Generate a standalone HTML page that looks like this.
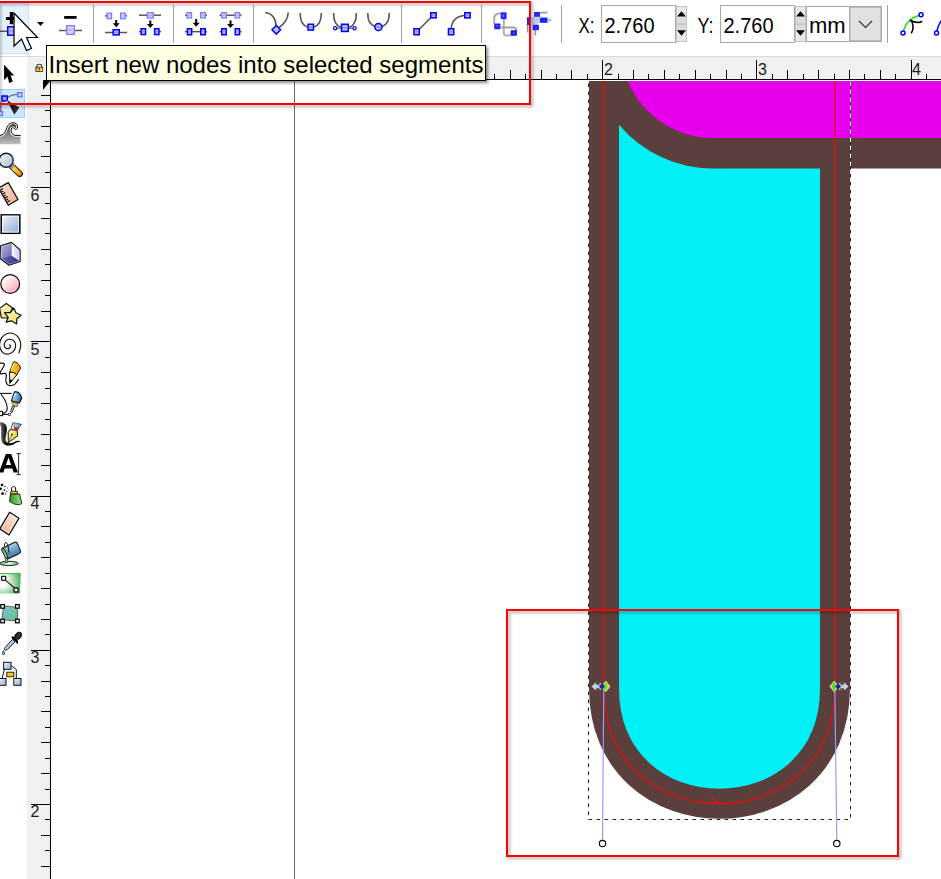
<!DOCTYPE html>
<html><head><meta charset="utf-8"><style>
html,body{margin:0;padding:0;width:941px;height:879px;overflow:hidden;background:#fff}
svg{display:block}
</style></head><body>
<svg width="941" height="879" viewBox="0 0 941 879">
<rect x="0" y="0" width="941" height="879" fill="#ffffff"/><rect x="0" y="56" width="941" height="1" fill="#dadada"/><rect x="27" y="57" width="914" height="22" fill="#f0f0f0"/><rect x="27" y="57" width="23" height="822" fill="#f0f0f0"/><rect x="50" y="80" width="1" height="799" fill="#000"/><rect x="50" y="79" width="891" height="1" fill="#000"/><rect x="63" y="74" width="1" height="5" fill="#000"/><rect x="78" y="70" width="1" height="9" fill="#000"/><rect x="93" y="74" width="1" height="5" fill="#000"/><rect x="109" y="70" width="1" height="9" fill="#000"/><rect x="124" y="74" width="1" height="5" fill="#000"/><rect x="140" y="60" width="1" height="19" fill="#000"/><rect x="155" y="74" width="1" height="5" fill="#000"/><rect x="170" y="70" width="1" height="9" fill="#000"/><rect x="186" y="74" width="1" height="5" fill="#000"/><rect x="201" y="70" width="1" height="9" fill="#000"/><rect x="217" y="74" width="1" height="5" fill="#000"/><rect x="232" y="70" width="1" height="9" fill="#000"/><rect x="248" y="74" width="1" height="5" fill="#000"/><rect x="263" y="70" width="1" height="9" fill="#000"/><rect x="278" y="74" width="1" height="5" fill="#000"/><rect x="294" y="60" width="1" height="19" fill="#000"/><rect x="309" y="74" width="1" height="5" fill="#000"/><rect x="325" y="70" width="1" height="9" fill="#000"/><rect x="340" y="74" width="1" height="5" fill="#000"/><rect x="355" y="70" width="1" height="9" fill="#000"/><rect x="371" y="74" width="1" height="5" fill="#000"/><rect x="386" y="70" width="1" height="9" fill="#000"/><rect x="402" y="74" width="1" height="5" fill="#000"/><rect x="417" y="70" width="1" height="9" fill="#000"/><rect x="433" y="74" width="1" height="5" fill="#000"/><rect x="448" y="60" width="1" height="19" fill="#000"/><rect x="463" y="74" width="1" height="5" fill="#000"/><rect x="479" y="70" width="1" height="9" fill="#000"/><rect x="494" y="74" width="1" height="5" fill="#000"/><rect x="510" y="70" width="1" height="9" fill="#000"/><rect x="525" y="74" width="1" height="5" fill="#000"/><rect x="541" y="70" width="1" height="9" fill="#000"/><rect x="556" y="74" width="1" height="5" fill="#000"/><rect x="571" y="70" width="1" height="9" fill="#000"/><rect x="587" y="74" width="1" height="5" fill="#000"/><rect x="602" y="60" width="1" height="19" fill="#000"/><rect x="618" y="74" width="1" height="5" fill="#000"/><rect x="633" y="70" width="1" height="9" fill="#000"/><rect x="648" y="74" width="1" height="5" fill="#000"/><rect x="664" y="70" width="1" height="9" fill="#000"/><rect x="679" y="74" width="1" height="5" fill="#000"/><rect x="695" y="70" width="1" height="9" fill="#000"/><rect x="710" y="74" width="1" height="5" fill="#000"/><rect x="726" y="70" width="1" height="9" fill="#000"/><rect x="741" y="74" width="1" height="5" fill="#000"/><rect x="756" y="60" width="1" height="19" fill="#000"/><rect x="772" y="74" width="1" height="5" fill="#000"/><rect x="787" y="70" width="1" height="9" fill="#000"/><rect x="803" y="74" width="1" height="5" fill="#000"/><rect x="818" y="70" width="1" height="9" fill="#000"/><rect x="834" y="74" width="1" height="5" fill="#000"/><rect x="849" y="70" width="1" height="9" fill="#000"/><rect x="864" y="74" width="1" height="5" fill="#000"/><rect x="880" y="70" width="1" height="9" fill="#000"/><rect x="895" y="74" width="1" height="5" fill="#000"/><rect x="911" y="60" width="1" height="19" fill="#000"/><rect x="926" y="74" width="1" height="5" fill="#000"/><text x="604.1" y="75" font-family='"Liberation Sans", sans-serif' font-size="16" fill="#1a1a1a">2</text><text x="758.1" y="75" font-family='"Liberation Sans", sans-serif' font-size="16" fill="#1a1a1a">3</text><text x="912.1" y="75" font-family='"Liberation Sans", sans-serif' font-size="16" fill="#1a1a1a">4</text><text x="450.1" y="75" font-family='"Liberation Sans", sans-serif' font-size="16" fill="#1a1a1a">1</text><rect x="41" y="95" width="9" height="1" fill="#000"/><rect x="45" y="110" width="5" height="1" fill="#000"/><rect x="41" y="126" width="9" height="1" fill="#000"/><rect x="45" y="141" width="5" height="1" fill="#000"/><rect x="41" y="156" width="9" height="1" fill="#000"/><rect x="45" y="172" width="5" height="1" fill="#000"/><rect x="31" y="187" width="19" height="1" fill="#000"/><rect x="45" y="203" width="5" height="1" fill="#000"/><rect x="41" y="218" width="9" height="1" fill="#000"/><rect x="45" y="233" width="5" height="1" fill="#000"/><rect x="41" y="249" width="9" height="1" fill="#000"/><rect x="45" y="264" width="5" height="1" fill="#000"/><rect x="41" y="280" width="9" height="1" fill="#000"/><rect x="45" y="295" width="5" height="1" fill="#000"/><rect x="41" y="311" width="9" height="1" fill="#000"/><rect x="45" y="326" width="5" height="1" fill="#000"/><rect x="31" y="341" width="19" height="1" fill="#000"/><rect x="45" y="357" width="5" height="1" fill="#000"/><rect x="41" y="372" width="9" height="1" fill="#000"/><rect x="45" y="388" width="5" height="1" fill="#000"/><rect x="41" y="403" width="9" height="1" fill="#000"/><rect x="45" y="419" width="5" height="1" fill="#000"/><rect x="41" y="434" width="9" height="1" fill="#000"/><rect x="45" y="449" width="5" height="1" fill="#000"/><rect x="41" y="465" width="9" height="1" fill="#000"/><rect x="45" y="480" width="5" height="1" fill="#000"/><rect x="31" y="496" width="19" height="1" fill="#000"/><rect x="45" y="511" width="5" height="1" fill="#000"/><rect x="41" y="526" width="9" height="1" fill="#000"/><rect x="45" y="542" width="5" height="1" fill="#000"/><rect x="41" y="557" width="9" height="1" fill="#000"/><rect x="45" y="573" width="5" height="1" fill="#000"/><rect x="41" y="588" width="9" height="1" fill="#000"/><rect x="45" y="604" width="5" height="1" fill="#000"/><rect x="41" y="619" width="9" height="1" fill="#000"/><rect x="45" y="634" width="5" height="1" fill="#000"/><rect x="31" y="650" width="19" height="1" fill="#000"/><rect x="45" y="665" width="5" height="1" fill="#000"/><rect x="41" y="681" width="9" height="1" fill="#000"/><rect x="45" y="696" width="5" height="1" fill="#000"/><rect x="41" y="711" width="9" height="1" fill="#000"/><rect x="45" y="727" width="5" height="1" fill="#000"/><rect x="41" y="742" width="9" height="1" fill="#000"/><rect x="45" y="758" width="5" height="1" fill="#000"/><rect x="41" y="773" width="9" height="1" fill="#000"/><rect x="45" y="789" width="5" height="1" fill="#000"/><rect x="31" y="804" width="19" height="1" fill="#000"/><rect x="45" y="819" width="5" height="1" fill="#000"/><rect x="41" y="835" width="9" height="1" fill="#000"/><rect x="45" y="850" width="5" height="1" fill="#000"/><rect x="41" y="866" width="9" height="1" fill="#000"/><text x="30.6" y="200.79999999999998" font-family='"Liberation Sans", sans-serif' font-size="16" fill="#1a1a1a">6</text><text x="30.6" y="354.8" font-family='"Liberation Sans", sans-serif' font-size="16" fill="#1a1a1a">5</text><text x="30.6" y="508.8" font-family='"Liberation Sans", sans-serif' font-size="16" fill="#1a1a1a">4</text><text x="30.6" y="662.8000000000001" font-family='"Liberation Sans", sans-serif' font-size="16" fill="#1a1a1a">3</text><text x="30.6" y="816.8000000000001" font-family='"Liberation Sans", sans-serif' font-size="16" fill="#1a1a1a">2</text><path d="M43,90 L50,81 L50,80 L43,80 Z" fill="#000"/><linearGradient id="gLock" x1="0" y1="0" x2="1" y2="1"><stop offset="0" stop-color="#e07000"/><stop offset="0.5" stop-color="#f8c820"/><stop offset="1" stop-color="#fff070"/></linearGradient><path d="M37,67.2 V65.6 C37,64.6 37.8,64.3 39.3,64.3 C40.8,64.3 41.6,64.6 41.6,65.6 V67.2" fill="#fff" stroke="#333" stroke-width="1.1"/><rect x="35.8" y="67.1" width="6.9" height="4.4" fill="url(#gLock)" stroke="#2a2a2a" stroke-width="0.8"/><rect x="38.9" y="68.2" width="1" height="2.2" fill="#222"/><rect x="294" y="80" width="1" height="799" fill="#6a6a6a"/><clipPath id="cv"><rect x="51" y="81" width="890" height="798"/></clipPath><g clip-path="url(#cv)"><rect x="589" y="60" width="261" height="626" fill="#5a3f3d"/><rect x="589" y="138" width="400" height="30.5" fill="#5a3f3d"/><path d="M623.88,70 A92.4,92.4 0 0 0 713,138.0 H960 V70 Z" fill="#e600eb"/><path d="M619,124.77 A122.9,122.9 0 0 0 713,168.50 H820 V687 H619 Z" fill="#00f0f5"/><path d="M604,686 C602,843 837,843 835,686 Z" fill="#00f0f5"/><path d="M604,686 C602,843 837,843 835,686" fill="none" stroke="#5a3f3d" stroke-width="30"/><rect x="589" y="680" width="30" height="7" fill="#5a3f3d"/><rect x="820" y="680" width="30" height="7" fill="#5a3f3d"/><path d="M603.8,80 V686 C601.8,843 836.8,843 834.8,686 V80" fill="none" stroke="#e01010" stroke-width="1.3"/><path d="M711,798.4 L718.8,803.4" fill="none" stroke="#f01010" stroke-width="1.3"/><path d="M588.5,75.5 V819.5 H850.5 V70" fill="none" stroke="#fff" stroke-width="1"/><path d="M588.5,75.5 V819.5 H850.5 V70" fill="none" stroke="#222" stroke-width="1" stroke-dasharray="3.6,4.4"/><path d="M603.8,686 L602.5,843.5 M834.8,686 L836.8,843.5" stroke="#9a9aff" stroke-width="1.2"/><circle cx="602.5" cy="843.6" r="3.2" fill="#fff" stroke="#000" stroke-width="1.1"/><circle cx="836.8" cy="843.6" r="3.2" fill="#fff" stroke="#000" stroke-width="1.1"/><path d="M591.20,686.40 L596.20,681.80 L596.20,684.40 L599.40,684.40 L599.40,681.80 L604.30,686.40 L599.40,691.00 L599.40,688.40 L596.20,688.40 L596.20,691.00 Z" fill="#c4d4d8" stroke="#3a2a28" stroke-width="0.6" stroke-opacity="0.6"/><path d="M605.8,681.0 L610.0999999999999,686.4 L605.8,691.8 L601.5,686.4 Z" fill="#cccc40" stroke="#d8f0f0" stroke-width="0.7"/><path d="M604.5999999999999,681.8 L606.1999999999999,686.4 L604.5999999999999,691.0 L602.5999999999999,686.4 Z" fill="#22ee22"/><path d="M601.8,683.8 L604.4,686.4 L601.8,689.0 L599.1999999999999,686.4 Z" fill="#2020cc" stroke="#000" stroke-width="0.5"/><path d="M848.80,686.40 L843.80,681.80 L843.80,684.40 L840.60,684.40 L840.60,681.80 L835.70,686.40 L840.60,691.00 L840.60,688.40 L843.80,688.40 L843.80,691.00 Z" fill="#c4d4d8" stroke="#3a2a28" stroke-width="0.6" stroke-opacity="0.6"/><path d="M834.2,681.0 L838.5,686.4 L834.2,691.8 L829.9000000000001,686.4 Z" fill="#cccc40" stroke="#d8f0f0" stroke-width="0.7"/><path d="M834.0,681.4 L835.4000000000001,686.4 L834.0,691.4 L832.6,686.4 Z" fill="#22dd33"/><path d="M838.2,683.8 L840.8000000000001,686.4 L838.2,689.0 L835.6,686.4 Z" fill="#2020cc" stroke="#000" stroke-width="0.5"/></g><filter id="sh" x="-5%" y="-5%" width="110%" height="115%"><feGaussianBlur in="SourceAlpha" stdDeviation="1.6"/><feOffset dx="1.5" dy="2" result="b"/><feFlood flood-color="#000" flood-opacity="0.35"/><feComposite in2="b" operator="in"/><feMerge><feMergeNode/><feMergeNode in="SourceGraphic"/></feMerge></filter><rect x="507" y="610" width="391" height="246" fill="none" stroke="#ff0000" stroke-width="2" filter="url(#sh)"/><rect x="-1" y="3.5" width="29.5" height="50" fill="#e5f1fb" stroke="#cce4f7" stroke-width="1"/><rect x="93" y="5" width="1" height="38" fill="#a0a0a0"/><rect x="173" y="5" width="1" height="38" fill="#a0a0a0"/><rect x="253" y="5" width="1" height="38" fill="#a0a0a0"/><rect x="401" y="5" width="1" height="38" fill="#a0a0a0"/><rect x="481" y="5" width="1" height="38" fill="#a0a0a0"/><rect x="561" y="5" width="1" height="38" fill="#a0a0a0"/><rect x="887" y="5" width="1" height="38" fill="#a0a0a0"/><rect x="9.8" y="12" width="3.4" height="12.2" fill="#000"/><rect x="6" y="17" width="10" height="3" fill="#000"/><path d="M0,31.3 L26,31.3" stroke="#555" stroke-width="1.5" fill="none"/><rect x="7.75" y="26.75" width="6.5" height="8.5" fill="#b8b8f0" stroke="#0000ff" stroke-width="1.5"/><rect x="9.2" y="30.5" width="3.5999999999999996" height="1" fill="#8080c0"/><path d="M37,22 L44,22 L40.5,26 Z" fill="#000"/><rect x="64.2" y="16" width="12.4" height="2.8" fill="#000"/><path d="M59,30.5 L82,30.5" stroke="#555" stroke-width="1.5" fill="none"/><rect x="66.65" y="25.65" width="7.7" height="8.7" fill="#d4d4ff" stroke="#7b7bff" stroke-width="1.3"/><rect x="68" y="29.5" width="5" height="1" fill="#a0a0e0"/><path d="M105,15.8 L108,15.8" stroke="#555" stroke-width="1.5" fill="none"/><path d="M124,15.8 L127,15.8" stroke="#555" stroke-width="1.5" fill="none"/><rect x="107.05000000000001" y="13.15" width="4.499999999999997" height="5.599999999999999" fill="#d4d4ff" stroke="#7b7bff" stroke-width="1.3"/><rect x="108.4" y="15.45" width="1.7999999999999972" height="1" fill="#a0a0e0"/><rect x="120.65" y="13.15" width="4.600000000000006" height="5.599999999999999" fill="#d4d4ff" stroke="#7b7bff" stroke-width="1.3"/><rect x="122" y="15.45" width="1.9000000000000057" height="1" fill="#a0a0e0"/><rect x="115.2" y="20" width="2" height="4.199999999999999" fill="#000"/><path d="M112.7,23.2 L119.7,23.2 L116.2,27.2 Z" fill="#000"/><path d="M105,32.5 L127,32.5" stroke="#555" stroke-width="1.5" fill="none"/><rect x="113.15" y="29.75" width="6.099999999999994" height="5.100000000000001" fill="#b8b8f0" stroke="#0000ff" stroke-width="1.5"/><rect x="114.60000000000001" y="31.799999999999997" width="3.199999999999994" height="1" fill="#8080c0"/><path d="M139,15.2 L161,15.2" stroke="#555" stroke-width="1.5" fill="none"/><rect x="147.25" y="12.75" width="6.0000000000000115" height="5.3" fill="#d4d4ff" stroke="#7b7bff" stroke-width="1.3"/><rect x="148.6" y="14.899999999999999" width="3.3000000000000114" height="1" fill="#a0a0e0"/><rect x="149.3" y="20.5" width="2" height="4.5" fill="#000"/><path d="M146.8,24 L153.8,24 L150.3,28 Z" fill="#000"/><path d="M139,31.6 L142,31.6" stroke="#555" stroke-width="1.5" fill="none"/><path d="M158,31.6 L161,31.6" stroke="#555" stroke-width="1.5" fill="none"/><rect x="141.15" y="28.75" width="4.400000000000006" height="5.799999999999997" fill="#b8b8f0" stroke="#0000ff" stroke-width="1.5"/><rect x="142.6" y="31.15" width="1.5000000000000053" height="1" fill="#8080c0"/><rect x="154.65" y="28.75" width="4.299999999999983" height="5.799999999999997" fill="#b8b8f0" stroke="#0000ff" stroke-width="1.5"/><rect x="156.1" y="31.15" width="1.3999999999999826" height="1" fill="#8080c0"/><path d="M185,15.2 L188,15.2" stroke="#555" stroke-width="1.5" fill="none"/><path d="M204,15.2 L207,15.2" stroke="#555" stroke-width="1.5" fill="none"/><rect x="187.05" y="12.65" width="4.499999999999983" height="5.300000000000002" fill="#d4d4ff" stroke="#7b7bff" stroke-width="1.3"/><rect x="188.4" y="14.8" width="1.799999999999983" height="1" fill="#a0a0e0"/><rect x="200.65" y="12.65" width="4.7" height="5.300000000000002" fill="#d4d4ff" stroke="#7b7bff" stroke-width="1.3"/><rect x="202" y="14.8" width="2" height="1" fill="#a0a0e0"/><rect x="195.2" y="19" width="2" height="4.800000000000001" fill="#000"/><path d="M192.7,22.8 L199.7,22.8 L196.2,26.8 Z" fill="#000"/><path d="M185,31.7 L207,31.7" stroke="#555" stroke-width="1.5" fill="none"/><rect x="187.45" y="28.75" width="4.200000000000017" height="6.0" fill="#b8b8f0" stroke="#0000ff" stroke-width="1.5"/><rect x="188.89999999999998" y="31.25" width="1.3000000000000167" height="1" fill="#8080c0"/><rect x="200.75" y="28.75" width="4.5" height="6.0" fill="#b8b8f0" stroke="#0000ff" stroke-width="1.5"/><rect x="202.2" y="31.25" width="1.5999999999999996" height="1" fill="#8080c0"/><path d="M219.5,15.2 L241.5,15.2" stroke="#555" stroke-width="1.5" fill="none"/><rect x="221.65" y="12.65" width="4.7" height="5.300000000000002" fill="#d4d4ff" stroke="#7b7bff" stroke-width="1.3"/><rect x="223" y="14.8" width="2" height="1" fill="#a0a0e0"/><rect x="235.15" y="12.65" width="4.5000000000000115" height="5.300000000000002" fill="#d4d4ff" stroke="#7b7bff" stroke-width="1.3"/><rect x="236.5" y="14.8" width="1.8000000000000114" height="1" fill="#a0a0e0"/><rect x="229.5" y="20.5" width="2" height="4.5" fill="#000"/><path d="M227.0,24 L234.0,24 L230.5,28 Z" fill="#000"/><path d="M219.5,31.7 L222,31.7" stroke="#555" stroke-width="1.5" fill="none"/><path d="M239,31.7 L241.5,31.7" stroke="#555" stroke-width="1.5" fill="none"/><rect x="221.75" y="28.75" width="4.5" height="6.0" fill="#b8b8f0" stroke="#0000ff" stroke-width="1.5"/><rect x="223.2" y="31.25" width="1.5999999999999996" height="1" fill="#8080c0"/><rect x="235.25" y="28.75" width="4.300000000000011" height="6.0" fill="#b8b8f0" stroke="#0000ff" stroke-width="1.5"/><rect x="236.7" y="31.25" width="1.400000000000011" height="1" fill="#8080c0"/><path d="M265.2,12.8 C272,13 276,19 276,26" fill="none" stroke="#555" stroke-width="1.6"/><path d="M279,27.5 C284,24 288,19 288.2,12.5" fill="none" stroke="#555" stroke-width="1.6"/><path d="M276.3,25.5 L280.6,29.8 L276.3,34.1 L272,29.8 Z" fill="#c0c0f0" stroke="#0000ff" stroke-width="1.5"/><path d="M300.2,13 C300,21 303,25.5 307.5,27 M314,27 C318.5,25.5 321.5,21 321.3,13" fill="none" stroke="#555" stroke-width="1.6"/><rect x="308.05" y="24.25" width="5.399999999999977" height="5.800000000000001" fill="#b8b8f0" stroke="#0000ff" stroke-width="1.5"/><rect x="309.5" y="26.65" width="2.499999999999977" height="1" fill="#8080c0"/><path d="M333.6,13 C333.5,21 336.5,26 341,27.5 M349,27.5 C353.5,26 356.5,21 356.3,13" fill="none" stroke="#555" stroke-width="1.6"/><path d="M337,28.2 L341,28.2" stroke="#555" stroke-width="1.2" fill="none"/><path d="M349,28.2 L353,28.2" stroke="#555" stroke-width="1.2" fill="none"/><circle cx="335.1" cy="28.2" r="1.6" fill="#fff" stroke="#0000ff" stroke-width="1.2"/><circle cx="354.6" cy="28.2" r="1.6" fill="#fff" stroke="#0000ff" stroke-width="1.2"/><rect x="341.55" y="24.25" width="6.699999999999989" height="7.200000000000003" fill="#b8b8f0" stroke="#0000ff" stroke-width="1.5"/><rect x="343.0" y="27.35" width="3.7999999999999883" height="1" fill="#8080c0"/><path d="M367.8,13 C367.5,21 370.5,25 375,26.5 M382,26.5 C386.5,25 389.5,21 389.2,13" fill="none" stroke="#555" stroke-width="1.6"/><circle cx="378.4" cy="27" r="3.6" fill="#b8b8f0" stroke="#0000ff" stroke-width="1.5"/><rect x="376" y="26.5" width="5" height="1" fill="#8080c0"/><path d="M417,31.5 L433,15.5" stroke="#555" stroke-width="1.6" fill="none"/><rect x="413.95" y="28.75" width="5.300000000000011" height="6.0" fill="#b8b8f0" stroke="#0000ff" stroke-width="1.5"/><rect x="415.4" y="31.25" width="2.400000000000011" height="1" fill="#8080c0"/><rect x="430.75" y="12.75" width="5.399999999999977" height="5.100000000000001" fill="#b8b8f0" stroke="#0000ff" stroke-width="1.5"/><rect x="432.2" y="14.8" width="2.499999999999977" height="1" fill="#8080c0"/><path d="M451.2,29 C451.5,21 456,16 466,15.3" fill="none" stroke="#555" stroke-width="1.6"/><rect x="448.45" y="28.75" width="5.300000000000011" height="6.0" fill="#b8b8f0" stroke="#0000ff" stroke-width="1.5"/><rect x="449.9" y="31.25" width="2.400000000000011" height="1" fill="#8080c0"/><rect x="464.75" y="12.75" width="5.399999999999977" height="5.100000000000001" fill="#b8b8f0" stroke="#0000ff" stroke-width="1.5"/><rect x="466.2" y="14.8" width="2.499999999999977" height="1" fill="#8080c0"/><path d="M501,13.2 C497,13.2 494.2,14.5 494.2,18.5 V24" fill="none" stroke="#a8a8a8" stroke-width="2"/><path d="M503.8,19 V33.5 C503.8,35 505,35.6 508,35.6 H511" fill="none" stroke="#b0b0b0" stroke-width="2"/><path d="M501,27.6 H513 C515.5,27.6 516.4,28.6 516.4,31" fill="none" stroke="#a0a0a0" stroke-width="2"/><rect x="500.6" y="12.2" width="6" height="7" rx="1" fill="#2a2af8"/><rect x="494.2" y="23.4" width="6.2" height="5.8" rx="0.8" fill="#2020f8"/><rect x="510.6" y="30.3" width="6.3" height="5.4" rx="0.8" fill="#1a1af8"/><rect x="502.8" y="14.6" width="1.2" height="2.2" fill="#8888ff"/><rect x="496.6" y="25.6" width="1.4" height="1.2" fill="#8888ff"/><rect x="513" y="32.4" width="1.4" height="1.2" fill="#8888ff"/><path d="M527.6,24 V32.4 M535.4,30 V35.6 M540,12.6 H547.4 M546,20.2 H551" stroke="#9a9a9a" stroke-width="1.6" fill="none"/><path d="M531,17 L540.6,16.6 L549,17.6 L549.2,22.8 L539,23 L537.6,25 L531.4,25 Z" fill="#bcd2ea"/><rect x="534" y="12" width="6" height="4.8" fill="#2a2af8"/><rect x="540" y="17.8" width="7.3" height="4.9" rx="0.8" fill="#2020f8"/><rect x="532.6" y="24.7" width="6.4" height="5.5" rx="0.8" fill="#2a2af8"/><rect x="527" y="17.2" width="3" height="8" fill="#2020f8"/><path d="M903,33 C905,24 911,17 921,15" fill="none" stroke="#22dd22" stroke-width="1.6"/><path d="M910.2,20 C913.4,22.6 914.2,28.6 911.2,33.4 M909.6,20 C912.6,21.6 917,23.8 922.2,21.6" fill="none" stroke="#000" stroke-width="1.6"/><circle cx="903" cy="33" r="2" fill="#fff" stroke="#0000ff" stroke-width="1.5"/><circle cx="921" cy="14.7" r="2" fill="#fff" stroke="#0000ff" stroke-width="1.5"/><path d="M936.5,33 C938,26 940,22 942,20" fill="none" stroke="#0000ff" stroke-width="1.6"/><circle cx="936.5" cy="33" r="2" fill="#fff" stroke="#0000ff" stroke-width="1.5"/><defs>
<linearGradient id="gWave" gradientUnits="userSpaceOnUse" x1="0" y1="123" x2="0" y2="145"><stop offset="0" stop-color="#303030"/><stop offset="0.55" stop-color="#8a8a8a"/><stop offset="1" stop-color="#c4c4c4"/></linearGradient>
<linearGradient id="gGlass" x1="0" y1="0" x2="1" y2="1"><stop offset="0" stop-color="#f4f8fc"/><stop offset="1" stop-color="#a8bcd0"/></linearGradient>
<linearGradient id="gOrange" x1="0" y1="0" x2="1" y2="0"><stop offset="0" stop-color="#ffd84a"/><stop offset="1" stop-color="#f08c00"/></linearGradient>
<linearGradient id="gPeach" x1="0" y1="0" x2="1" y2="1"><stop offset="0" stop-color="#fbe8e0"/><stop offset="1" stop-color="#eeaa88"/></linearGradient>
<linearGradient id="gRect" x1="0" y1="0" x2="1" y2="1"><stop offset="0" stop-color="#f4f6fb"/><stop offset="1" stop-color="#8aaad0"/></linearGradient>
<linearGradient id="gPink" x1="0.1" y1="0.1" x2="0.9" y2="0.9"><stop offset="0.1" stop-color="#ffffff"/><stop offset="1" stop-color="#ffa0b4"/></linearGradient>
<linearGradient id="gYellow" x1="0" y1="0" x2="0.6" y2="1"><stop offset="0" stop-color="#fffef0"/><stop offset="1" stop-color="#f2da58"/></linearGradient>
<linearGradient id="gBlue" x1="0" y1="0" x2="1" y2="1"><stop offset="0" stop-color="#c8e4f4"/><stop offset="1" stop-color="#3a6ea8"/></linearGradient>
<linearGradient id="gGreen" x1="0" y1="0" x2="1" y2="0"><stop offset="0" stop-color="#2a9a2a"/><stop offset="1" stop-color="#a0e080"/></linearGradient>
<radialGradient id="gGrad" gradientUnits="userSpaceOnUse" cx="3" cy="582" r="19" fx="2" fy="581"><stop offset="0" stop-color="#ffffff"/><stop offset="0.3" stop-color="#f4fbf4"/><stop offset="1" stop-color="#44ac52"/></radialGradient>
<linearGradient id="gGrad2" x1="0" y1="0" x2="1" y2="0"><stop offset="0" stop-color="#a8d8a8"/><stop offset="1" stop-color="#40aa50"/></linearGradient>
<linearGradient id="gMesh" x1="0" y1="0" x2="1" y2="1"><stop offset="0" stop-color="#88bce0"/><stop offset="1" stop-color="#60c480"/></linearGradient>
<linearGradient id="gNode" x1="0" y1="0" x2="1" y2="1"><stop offset="0" stop-color="#e8f0fa"/><stop offset="1" stop-color="#90b0d8"/></linearGradient>
<linearGradient id="gTri" x1="0" y1="0" x2="1" y2="1"><stop offset="0" stop-color="#000"/><stop offset="1" stop-color="#3a3a3a"/></linearGradient>
<linearGradient id="gCream" x1="0" y1="0" x2="1" y2="1"><stop offset="0" stop-color="#ffffff"/><stop offset="1" stop-color="#f8c020"/></linearGradient>
<linearGradient id="gOrange2" x1="0" y1="0" x2="1" y2="0"><stop offset="0" stop-color="#f8f020"/><stop offset="0.4" stop-color="#fcc020"/><stop offset="1" stop-color="#f89010"/></linearGradient>
<linearGradient id="gPen" x1="0" y1="0" x2="1" y2="0.3"><stop offset="0" stop-color="#e8f8ff"/><stop offset="0.35" stop-color="#a8d4e8"/><stop offset="1" stop-color="#3468a8"/></linearGradient>
<linearGradient id="gCal" x1="0" y1="0" x2="1" y2="0"><stop offset="0" stop-color="#888"/><stop offset="0.35" stop-color="#000"/><stop offset="1" stop-color="#000"/></linearGradient>
<linearGradient id="gNib" x1="0" y1="0" x2="1" y2="1"><stop offset="0" stop-color="#fffbe0"/><stop offset="0.5" stop-color="#f8e060"/><stop offset="1" stop-color="#e8b800"/></linearGradient>
<linearGradient id="gCap" x1="0" y1="0" x2="1" y2="0"><stop offset="0" stop-color="#b8e4f0"/><stop offset="1" stop-color="#3a6ea8"/></linearGradient>
<linearGradient id="gEraser" x1="1" y1="0" x2="0" y2="1"><stop offset="0" stop-color="#fdf2ee"/><stop offset="1" stop-color="#eca88a"/></linearGradient>
<linearGradient id="gPuddle" x1="0" y1="0" x2="1" y2="0"><stop offset="0" stop-color="#58c058"/><stop offset="0.5" stop-color="#e0f6e0"/><stop offset="1" stop-color="#58c058"/></linearGradient>
<linearGradient id="gBucket" x1="0" y1="0" x2="0.4" y2="1"><stop offset="0" stop-color="#e8f8ff"/><stop offset="0.4" stop-color="#8cc0dc"/><stop offset="1" stop-color="#3a6aa8"/></linearGradient>
<linearGradient id="gMouth" x1="0" y1="0" x2="0" y2="1"><stop offset="0" stop-color="#40b040"/><stop offset="1" stop-color="#c0f0c0"/></linearGradient>
<linearGradient id="gTube" x1="0" y1="0" x2="1" y2="1"><stop offset="0" stop-color="#ffffff"/><stop offset="1" stop-color="#6a9ad8"/></linearGradient>
<linearGradient id="gBulb" x1="0" y1="0" x2="1" y2="1"><stop offset="0" stop-color="#000"/><stop offset="0.5" stop-color="#333"/><stop offset="1" stop-color="#000"/></linearGradient>
<linearGradient id="gBoxL" x1="0" y1="0" x2="1" y2="1"><stop offset="0" stop-color="#b4b4dc"/><stop offset="1" stop-color="#6a6ab4"/></linearGradient>
<linearGradient id="gBoxR" x1="0" y1="0" x2="1" y2="0"><stop offset="0" stop-color="#ffffff"/><stop offset="1" stop-color="#c4c4f0"/></linearGradient>
<linearGradient id="gBoxB" x1="0" y1="0" x2="1" y2="0"><stop offset="0" stop-color="#6a6ab8"/><stop offset="1" stop-color="#2e2e88"/></linearGradient>
</defs><path d="M4.1,64.8 L4.1,80 L7.6,76.6 L9.2,83 L12.8,81.6 L10.6,75.6 L14.2,75.6 Z" fill="#000"/><rect x="-1" y="89.5" width="25.5" height="28" fill="#cce8ff" stroke="#99d1ff" stroke-width="1"/><path d="M7.8,97.5 C11,95 14,94.5 17.5,94.5" fill="none" stroke="#555" stroke-width="1.2"/><path d="M0.8,102 V111" stroke="#555" stroke-width="1.2"/><rect x="17.6" y="92.6" width="4.4" height="4.2" fill="#c8c8ff" stroke="#6a6aff" stroke-width="1.2"/><rect x="-0.5" y="111.5" width="3" height="4" fill="#c8c8ff" stroke="#6a6aff" stroke-width="1.2"/><rect x="2" y="96" width="5.2" height="5" fill="#a0a0f4" stroke="#0000ff" stroke-width="1.5"/><path d="M7.2,100.4 L19.4,107.6 L14.3,114.8 Z" fill="url(#gTri)"/><path d="M5,103 L7.5,100.8" stroke="#fff" stroke-width="1"/><path d="M0,135.4 C3,135.2 4.6,133.5 5.8,130.5 C7,127 8.5,122.8 13,122.8 C15.8,122.8 17.6,124.5 17.6,127 C17.6,129.4 15.6,129.8 14.6,128.8 C13.6,127.8 12.8,127.4 11.8,128 C10.6,129 10.8,132 12.2,133.6 C13.4,135 14.6,135.4 16,135.4 H20.6 V144.3 H0 Z" fill="url(#gWave)"/><path d="M0,135.4 C3,135.2 4.6,133.5 5.8,130.5 C7,127 8.5,122.8 13,122.8 C15.8,122.8 17.6,124.5 17.6,127 C17.6,129.4 15.6,129.8 14.6,128.8 C13.6,127.8 12.8,127.4 11.8,128 C10.6,129 10.8,132 12.2,133.6 C13.4,135 14.6,135.4 16,135.4 H20.6" fill="none" stroke="#fff" stroke-width="2.6"/><path d="M0,135.4 C3,135.2 4.6,133.5 5.8,130.5 C7,127 8.5,122.8 13,122.8 C15.8,122.8 17.6,124.5 17.6,127 C17.6,129.4 15.6,129.8 14.6,128.8 C13.6,127.8 12.8,127.4 11.8,128 C10.6,129 10.8,132 12.2,133.6 C13.4,135 14.6,135.4 16,135.4 H20.6" fill="none" stroke="#000" stroke-width="1"/><rect x="19.8" y="136" width="0.8" height="8.3" fill="#d8d8d8"/><path d="M12.6,167 L19.8,173.8" stroke="#222" stroke-width="6.4" stroke-linecap="round"/><path d="M13.2,167.6 L19.6,173.6" stroke="url(#gOrange)" stroke-width="4.4" stroke-linecap="round"/><path d="M11.2,165.2 L13.4,167.4" stroke="#9a9a9a" stroke-width="4.6"/><path d="M15,169 L19.4,173.2" stroke="#ffe9a0" stroke-width="0.8" stroke-opacity="0.8"/><circle cx="6.2" cy="160.3" r="7" fill="url(#gGlass)" stroke="#1a1a1a" stroke-width="1.4"/><path d="M-1.5,188.2 L8.3,182.6 L18,199.5 L8.3,205.2 Z" fill="url(#gPeach)" stroke="#111" stroke-width="1.3" stroke-linejoin="round"/><path d="M0.20,190.19 l2.77,-1.60 M1.35,192.18 l1.91,-1.10 M2.50,194.17 l2.77,-1.60 M3.65,196.16 l1.91,-1.10 M4.80,198.15 l2.77,-1.60 M5.95,200.14 l1.91,-1.10 M7.10,202.14 l2.77,-1.60 " stroke="#000" stroke-width="1.1"/><rect x="1.2" y="214.9" width="18.6" height="18.4" fill="url(#gRect)" stroke="#000" stroke-width="1.5"/><rect x="2.4" y="216.1" width="16.2" height="16" fill="none" stroke="#fff" stroke-width="0.8"/><path d="M0.6,245.8 L11.5,242.4 L20.2,250 L20.2,261.5 L9,265.3 L0,258.5 Z" fill="#8888c8"/><path d="M11.5,242.8 L19.7,250.2 L19.7,261.2 L11.5,255.8 Z" fill="url(#gBoxR)"/><path d="M11.5,255.8 L19.7,261.2 L9,264.8 L0.6,258.3 Z" fill="url(#gBoxB)"/><path d="M1.2,246.2 L11.5,243 L11.5,255.8 L0.8,258 Z" fill="url(#gBoxL)"/><path d="M1.6,246.6 L11.5,243.4 L19.4,250.4 L19.4,261 L9.2,264.4 L1.2,258.2 Z" fill="none" stroke="#fff" stroke-width="0.6" stroke-opacity="0.7"/><path d="M0.6,245.8 L11.5,242.4 L20.2,250 L20.2,261.5 L9,265.3 L0,258.5 Z" fill="none" stroke="#1a1a1a" stroke-width="1.1" stroke-linejoin="round"/><circle cx="10.2" cy="284" r="9.4" fill="url(#gPink)" stroke="#111" stroke-width="1.3"/><path d="M-0.4,308.4 L6.3,303.6 L12.6,308 L7.6,318 L1.4,318 Z" fill="url(#gYellow)" stroke="#111" stroke-width="1.2" stroke-linejoin="round"/><path d="M13.8,308 L15.9,312.8 L21.1,315.2 L16.8,318.8 L16.6,324 L11.3,320.8 L6,322.2 L8.2,317.4 L4.6,312.6 L10.4,312.6 Z" fill="url(#gYellow)" stroke="#111" stroke-width="1.2" stroke-linejoin="round"/><path d="M9.3,344.4 C9.50,344.73 10.55,345.73 10.5,346.4 C10.45,347.07 9.82,348.13 9,348.4 C8.18,348.67 6.40,348.67 5.6,348 C4.80,347.33 4.07,345.67 4.2,344.4 C4.33,343.13 5.37,341.25 6.4,340.4 C7.43,339.55 9.07,339.10 10.4,339.3 C11.73,339.50 13.53,340.48 14.4,341.6 C15.27,342.72 15.67,344.50 15.6,346 C15.53,347.50 15.03,349.30 14,350.6 C12.97,351.90 11.07,353.33 9.4,353.8 C7.73,354.27 5.47,354.10 4,353.4 C2.53,352.70 1.33,351.17 0.6,349.6 C-0.13,348.03 -0.60,346.00 -0.4,344 C-0.20,342.00 0.60,339.30 1.8,337.6 C3.00,335.90 5.10,334.53 6.8,333.8 C8.50,333.07 10.30,332.87 12,333.2 C13.70,333.53 15.67,334.57 17,335.8 C18.33,337.03 19.40,338.80 20,340.6 C20.60,342.40 20.82,344.47 20.6,346.6 C20.38,348.73 19.02,352.27 18.7,353.4" fill="none" stroke="#111" stroke-width="1.15"/><path d="M0,363.2 C0.60,363.23 2.88,363.07 3.6,363.4 C4.32,363.73 4.57,364.20 4.3,365.2 C4.03,366.20 2.68,368.20 2,369.4 C1.32,370.60 0.37,371.67 0.2,372.4 C0.03,373.13 0.20,373.63 1,373.8 C1.80,373.97 4.10,373.13 5,373.4 C5.90,373.67 6.27,374.30 6.4,375.4 C6.53,376.50 5.67,378.50 5.8,380 C5.93,381.50 6.43,383.47 7.2,384.4 C7.97,385.33 9.17,385.60 10.4,385.6 C11.63,385.60 13.23,385.47 14.6,384.4 C15.97,383.33 17.93,380.07 18.6,379.2" fill="none" stroke="#111" stroke-width="1.2"/><path d="M9.8,383.4 L9.5,372.4 C12,371.6 15,372.6 16.8,374.8 Z" fill="url(#gCream)" stroke="#111" stroke-width="1"/><path d="M9.5,372.4 L13.6,362 C15.5,361.4 18.5,362.6 20.6,368 L16.8,374.8 C15,372.6 12,371.6 9.5,372.4 Z" fill="url(#gOrange2)" stroke="#111" stroke-width="1"/><path d="M11.2,369.5 L14.2,363" stroke="#ffffa0" stroke-width="0.9"/><path d="M9.8,383.6 L9.6,379.2 L12.8,380.2 Z" fill="#000"/><path d="M0,393.4 H11.7" stroke="#111" stroke-width="1.1"/><path d="M1,394.3 C1.60,395.17 3.60,397.55 4.6,399.5 C5.60,401.45 6.63,404.15 7,406 C7.37,407.85 7.27,409.43 6.8,410.6 C6.33,411.77 4.90,412.50 4.2,413 C3.50,413.50 2.87,413.50 2.6,413.6" fill="none" stroke="#111" stroke-width="1.1"/><rect x="-0.6" y="411.4" width="3.2" height="4.2" fill="#fff" stroke="#111" stroke-width="1.1"/><path d="M2.6,414.4 H8.2" stroke="#111" stroke-width="1.1"/><circle cx="9.4" cy="414.4" r="1.25" fill="#fff" stroke="#111" stroke-width="1"/><path d="M10.6,411.8 L12.6,405.6 L14.6,406.4 L12,412.6 Z" fill="#ddd" stroke="#111" stroke-width="0.9"/><path d="M11.8,401.6 L18,403.6 L17.2,406.4 C15,406.6 12.6,405 11.8,401.6 Z" fill="#f8c830" stroke="#222" stroke-width="0.7"/><path d="M14.4,391.8 L16.6,391.9 C18.8,392.4 20.8,394.6 21.7,398.2 L19.4,403 L11.4,400.8 Z" fill="url(#gPen)" stroke="#111" stroke-width="1.1" stroke-linejoin="round"/><path d="M14,396.5 L15.6,393.2" stroke="#f0ffff" stroke-width="1"/><path d="M-1,422.2 C3,421.8 6.6,423.6 6.9,428.4 C7.1,433 5,437.5 5.6,440.6 C6.4,443.6 10.6,443.8 14,442.2 C16.4,441 18.4,440.2 21,441.6 C18.6,441.6 16.4,442.6 13.4,444.4 C10,446.2 5,446 2.8,443.2 C0.6,440.4 1.2,434 1.2,430 C1.2,426.6 0.4,424.6 -1,424.2 Z" fill="url(#gCal)"/><path d="M8.3,442.8 L8.2,432.2 L10.6,429.6 L17.2,430.4 L17.6,435.8 Z" fill="url(#gNib)" stroke="#111" stroke-width="1" stroke-linejoin="round"/><path d="M11.3,433.4 L12.6,433.6 L12.4,435.6 L11.2,435.4 Z" fill="#000"/><path d="M9,441.4 L11.6,435.6" stroke="#333" stroke-width="0.6"/><path d="M14.2,427.2 L18.8,428 L18.2,430.2 L13.4,429.6 Z" fill="#d81818"/><path d="M14.2,422.8 L21.6,424.2 L18.8,428 L14.2,427.2 Z" fill="url(#gCap)" stroke="#222" stroke-width="0.6"/><path d="M13.2,422 L11.2,428.4 L9,430.6" fill="none" stroke="#333" stroke-width="0.9"/><path d="M-1,472.5 L5.8,454 L11.2,454 L18,472.5 L13.6,472.5 L12.3,468.6 L4.7,468.6 L3.4,472.5 Z M5.9,465.1 L11.1,465.1 L8.5,457.5 Z" fill="#000" fill-rule="evenodd"/><path d="M18.6,454 V474.2 M16.4,453.6 H20.8 M16.4,474.6 H20.8" stroke="#111" stroke-width="0.9"/><circle cx="2" cy="485" r="1.3" fill="#000"/><circle cx="0.5" cy="488.8" r="1.3" fill="#000"/><circle cx="2.6" cy="493.6" r="1.3" fill="#000"/><circle cx="5" cy="486.5" r="0.8" fill="#333"/><circle cx="4.5" cy="490" r="0.9" fill="#333"/><circle cx="6.6" cy="491.5" r="0.8" fill="#555"/><circle cx="7.5" cy="488" r="0.7" fill="#777"/><circle cx="8.8" cy="490" r="0.6" fill="#999"/><circle cx="5.5" cy="494" r="0.7" fill="#333"/><path d="M11.6,491.6 V488 C11.6,487 12.2,486.7 13.5,486.7 C15,486.7 15.6,487 15.6,488 V491.6" fill="none" stroke="#111" stroke-width="1"/><path d="M10.8,491.3 L17.5,491.3 L17.3,494 L10.6,494.2 Z" fill="#f0c040" stroke="#111" stroke-width="0.8"/><path d="M10.4,494.2 L19.6,494 L21.8,503.5 C19,505.5 15,505 9.6,501.6 Z" fill="url(#gGreen)" stroke="#111" stroke-width="0.9"/><path d="M9.6,512.3 L19,518.2 L9,535 L-0.2,528.8 Z" fill="url(#gEraser)" stroke="#111" stroke-width="1.3" stroke-linejoin="round"/><path d="M9.9,514.2 L17.1,518.7 L8.7,532.9 L1.7,528.3 Z" fill="none" stroke="#fff" stroke-width="0.7" stroke-opacity="0.7"/><ellipse cx="9" cy="563.4" rx="9.4" ry="2.1" fill="url(#gPuddle)" stroke="#222" stroke-width="1"/><path d="M4.8,557 C5.6,559 5.6,561 5,562.4 L7.8,562.4 C7,561 7,559 7.6,557.4 Z" fill="#b8e8b8" stroke="#222" stroke-width="0.8"/><path d="M2.4,548.2 L14.2,542.4 C15.6,541.8 16.6,542.2 17.4,543.6 L20.4,550.6 C20.8,552 20.4,552.8 19.4,553.4 L7.8,559 Z" fill="url(#gBucket)" stroke="#111" stroke-width="1.1" stroke-linejoin="round"/><path d="M1.6,548.8 C2.6,547.4 3.6,548 5,550.6 C6.4,553.2 7.6,556.4 7.8,558.6 C7,559.4 5.8,558 4.2,555 C2.6,552 1.2,550 1.6,548.8 Z" fill="url(#gMouth)" stroke="#111" stroke-width="1"/><path d="M4.4,546.6 C4.4,544 5,542.4 5.8,542.4 C6.8,542.4 7.4,544 8,545.6 L8.9,552.4" fill="none" stroke="#111" stroke-width="1"/><circle cx="9" cy="552.6" r="0.9" fill="#ccc" stroke="#222" stroke-width="0.6"/><path d="M0,573.2 H20.8 L20,593.6 H0 Z" fill="url(#gGrad)"/><rect x="0" y="573" width="20.8" height="0.9" fill="#48b048"/><path d="M3.6,578.6 L15.8,589" stroke="#222" stroke-width="1.1"/><rect x="1.6" y="576.4" width="4" height="4" rx="0.6" fill="#fff" stroke="#222" stroke-width="1.4"/><rect x="14" y="588" width="4" height="4" rx="0.6" fill="#fff" stroke="#222" stroke-width="1.4"/><path d="M3.2,607 C6,605.2 10,606.6 16.6,607.4 C18.6,610 17.2,616 17.4,620.4 C13,621.6 7,619.6 2.6,620.2 C1.2,617 3.6,611 3.2,607 Z" fill="url(#gMesh)" stroke="#333" stroke-width="0.7"/><rect x="0.8" y="604.6" width="3.6" height="3.6" fill="#fff" stroke="#000" stroke-width="1.25"/><rect x="15.599999999999998" y="604.6" width="3.6" height="3.6" fill="#fff" stroke="#000" stroke-width="1.25"/><rect x="0.8" y="619.2" width="3.6" height="3.6" fill="#fff" stroke="#000" stroke-width="1.25"/><rect x="15.599999999999998" y="619.2" width="3.6" height="3.6" fill="#fff" stroke="#000" stroke-width="1.25"/><path d="M4.6,649.6 C4.2,649 4.4,648.2 5.2,647.4 L12.6,639.4 L15,641.8 L7,649.8 C6.2,650.4 5.2,650.4 4.6,649.6 Z" fill="url(#gTube)" stroke="#111" stroke-width="1"/><path d="M12.2,637.6 L17.4,642.8 C17.6,641.6 17,640.6 16.4,640 L14,637.6 C13.4,637 12.6,636.8 12.2,637.6 Z" fill="#000" stroke="#000" stroke-width="1.4"/><path d="M14.6,636.6 C15,634.4 16.6,632.6 18.6,632.2 C20.6,631.8 22,633 21.6,635.2 C21.2,637.4 19.6,639.2 17.6,639.6 Z" fill="url(#gBulb)" stroke="#000" stroke-width="0.8"/><path d="M2.4,653.4 C2.4,651.8 3.2,650.8 3.6,650.6 C4,651.4 4.8,652.6 4.6,653.8 C4.4,655 2.6,655.2 2.4,653.4 Z" fill="#8ab8e8" stroke="#222" stroke-width="0.8"/><path d="M11,665.5 L16.3,669.5 V679 M4.5,669 L2,678.5" fill="none" stroke="#111" stroke-width="1"/><rect x="3.6" y="662.3" width="7.4" height="7" fill="url(#gNode)" stroke="#111" stroke-width="1"/><rect x="6.8" y="672.2" width="7" height="4.6" fill="#f5c820" stroke="#111" stroke-width="0.9"/><rect x="-0.5" y="678.5" width="6.5" height="6.8" fill="url(#gNode)" stroke="#111" stroke-width="1"/><rect x="13.8" y="678.5" width="7.2" height="6.8" fill="url(#gNode)" stroke="#111" stroke-width="1"/><text x="578.5" y="33" font-family='"Liberation Sans", sans-serif' font-size="22" fill="#000" textLength="16" lengthAdjust="spacingAndGlyphs">X:</text><rect x="601.5" y="5.5" width="74" height="37" fill="#fff" stroke="#a8a8a8" stroke-width="1"/><text x="604.5" y="33" font-family='"Liberation Sans", sans-serif' font-size="22" fill="#000" textLength="50" lengthAdjust="spacingAndGlyphs">2.760</text><rect x="676.5" y="6.5" width="10" height="35" fill="#e8e8e8" stroke="#c4c4c4" stroke-width="1"/><path d="M677,16.6 L681.5,11.2 L686,16.6 Z" fill="#000"/><path d="M677,30.2 L681.5,35.8 L686,30.2 Z" fill="#000"/><rect x="677.5" y="17.6" width="8" height="5.6" fill="#dadada"/><rect x="677" y="23.6" width="9" height="1" fill="#a8a8a8"/><rect x="677.5" y="24.8" width="8" height="4.6" fill="#dadada"/><text x="697.5" y="33" font-family='"Liberation Sans", sans-serif' font-size="22" fill="#000" textLength="16" lengthAdjust="spacingAndGlyphs">Y:</text><rect x="720.5" y="5.5" width="74" height="37" fill="#fff" stroke="#a8a8a8" stroke-width="1"/><text x="723.5" y="33" font-family='"Liberation Sans", sans-serif' font-size="22" fill="#000" textLength="50" lengthAdjust="spacingAndGlyphs">2.760</text><rect x="795.5" y="6.5" width="10" height="35" fill="#e8e8e8" stroke="#c4c4c4" stroke-width="1"/><path d="M796,16.6 L800.5,11.2 L805,16.6 Z" fill="#000"/><path d="M796,30.2 L800.5,35.8 L805,30.2 Z" fill="#000"/><rect x="796.5" y="17.6" width="8" height="5.6" fill="#dadada"/><rect x="796" y="23.6" width="9" height="1" fill="#a8a8a8"/><rect x="796.5" y="24.8" width="8" height="4.6" fill="#dadada"/><rect x="806.5" y="6.5" width="75" height="35" fill="#fff" stroke="#a8a8a8"/><text x="809" y="33" font-family='"Liberation Sans", sans-serif' font-size="22" fill="#000">mm</text><rect x="849.75" y="7" width="31.5" height="34" fill="#e1e1e1" stroke="#adadad" stroke-width="1.5"/><path d="M859,21 L865.5,27.5 L872,21" fill="none" stroke="#333" stroke-width="1.2"/>
<rect x="-2" y="2" width="532" height="102" fill="none" stroke="#ff0000" stroke-width="2" filter="url(#sh)"/>
<filter id="tsh" x="-5%" y="-20%" width="110%" height="150%"><feGaussianBlur in="SourceAlpha" stdDeviation="1.5"/><feOffset dx="2" dy="2" result="b"/><feFlood flood-color="#000" flood-opacity="0.45"/><feComposite in2="b" operator="in"/><feMerge><feMergeNode/><feMergeNode in="SourceGraphic"/></feMerge></filter><rect x="46.5" y="45.5" width="439" height="35" fill="#ffffe1" stroke="#000" stroke-width="1" filter="url(#tsh)"/><text x="48.5" y="72.5" font-family='"Liberation Sans", sans-serif' font-size="24" fill="#000">Insert new nodes into selected segments</text>
<path d="M14,13 L14,46 L21.5,39 L26.5,50.5 L31.5,48.5 L26.5,37.5 L37.5,37.5 Z" fill="#fff" stroke="#000" stroke-width="1.2" stroke-linejoin="miter"/>
</svg>
</body></html>
